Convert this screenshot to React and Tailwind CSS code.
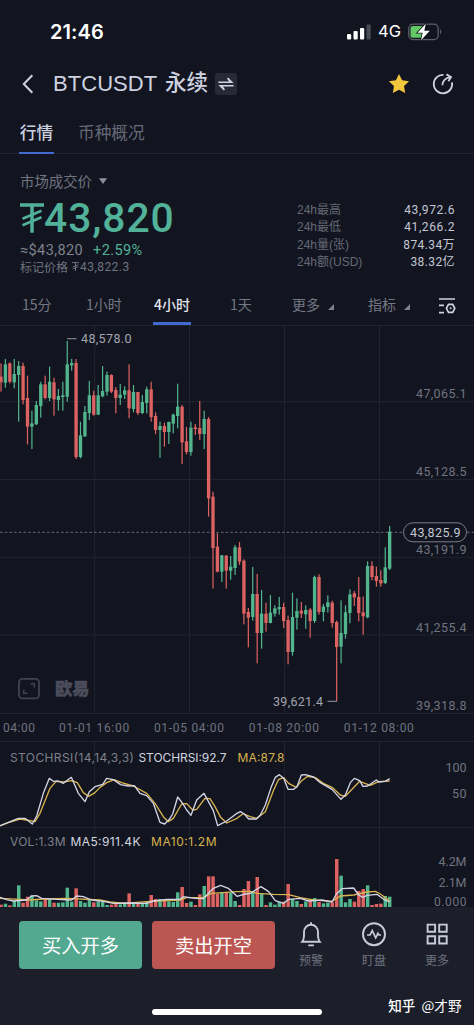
import React from "react";

const UP = "#52b58d";
const DOWN = "#dc6361";
const STEP = 13.25;

// Candles on a third-pixel grid: [direction, high, body top, body bottom, low, volume top]
const candles = [
  ["r",115,155,172,200,494],["g",102,118,173,188,491],["r",112,115,170,175,496],["g",102,147,172,190,482],
  ["g",108,123,150,290,436],["r",113,123,225,238,488],["r",152,219,305,358,470],["g",257,295,305,372,466],
  ["g",228,240,298,300,481],["g",170,178,243,278,484],["r",152,178,219,223,475],["g",125,170,219,228,477],
  ["r",158,172,223,272,488],["g",192,213,225,257,488],["g",170,211,216,257,487],["g",48,118,215,230,443],
  ["g",102,114,121,137,485],["r",102,114,396,402,445],["g",290,331,396,400,483],["g",243,261,334,336,488],
  ["g",168,211,264,285,478],["r",197,211,269,272,487],["g",180,211,269,270,484],["g",123,198,214,217,486],
  ["g",140,150,200,212,495],["r",148,150,200,204,494],["r",186,195,219,265,491],["g",177,209,219,240,493],
  ["g",184,196,209,222,490],["r",118,196,250,280,460],["g",180,201,252,262,486],["r",201,201,264,270,491],
  ["g",210,231,264,267,492],["g",185,193,234,265,483],["r",170,193,276,290,465],["r",262,273,315,328,477],
  ["g",290,303,315,398,477],["r",293,303,321,365,480],["g",290,291,321,357,484],["g",266,269,296,325,486],
  ["g",176,245,273,310,457],["r",240,245,352,417,441],["r",306,349,381,388,489],["g",290,308,381,392,485],
  ["r",297,307,312,330,495],["r",228,309,327,345,463],["g",257,282,327,372,438],["r",276,282,520,575,409],
  ["r",500,515,669,791,409],["r",625,665,740,742,461],["g",690,691,740,771,457],["r",690,692,737,791,458],
  ["g",693,725,737,764,458],["g",660,667,729,750,483],["r",651,667,710,720,495],["r",703,707,866,898,447],
  ["r",849,861,878,967,423],["g",726,807,876,887,455],["r",747,807,924,1015,411],["g",795,866,924,971,459],
  ["r",833,866,894,920,495],["g",810,863,894,895,487],["g",841,850,866,875,494],["g",816,846,853,869,486],
  ["r",833,846,888,909,485],["r",872,885,981,1018,432],["g",803,876,981,992,477],["g",820,858,878,914,483],
  ["r",831,857,866,879,492],["g",841,855,868,911,484],["r",849,854,888,938,481],["g",752,756,888,894,474],
  ["r",748,756,861,869,486],["g",837,845,861,889,490],["g",811,832,846,863,488],["r",827,833,894,908,487],
  ["r",887,891,966,1128,357],["g",826,924,965,1015,407],["g",841,862,927,941,487],["g",793,808,864,895,477],
  ["r",798,805,817,843,485],["r",756,816,864,889,453],["r",815,862,874,929,447],["g",709,723,877,880,436],
  ["r",709,723,756,766,495],["r",725,753,768,785,492],["r",736,765,775,785,491],["g",667,727,774,777,468],
  ["g",603,620,731,735,470],
];

const stochK = "0,257 55,235 75,235 97,252 110,228 130,160 148,115 160,124 175,123 190,130 214,112 235,160 255,185 268,155 285,140 308,133 320,115 340,119 362,134 385,138 403,137 420,160 440,167 460,190 480,247 494,252 508,238 518,222 533,171 548,190 560,210 573,226 590,180 612,160 640,212 653,257 680,243 711,220 721,215 733,222 746,237 769,237 781,225 796,195 814,140 826,112 838,104 851,115 864,148 881,148 891,140 904,105 916,104 941,111 961,128 996,148 1023,178 1036,165 1051,128 1063,115 1079,122 1089,139 1103,138 1129,120 1136,126 1156,124 1169,116";
const stochD = "0,258 25,248 60,237 80,240 105,245 120,220 150,145 168,124 190,126 215,122 232,128 250,158 266,169 285,158 300,142 320,128 342,119 365,128 400,138 440,160 465,190 490,230 505,245 520,235 545,192 560,191 578,210 590,208 615,175 630,176 645,200 662,232 680,249 711,235 729,221 750,230 771,235 796,215 821,150 836,118 851,113 866,130 889,142 905,122 923,109 946,113 970,130 996,142 1021,165 1036,169 1056,148 1079,124 1095,130 1111,136 1136,125 1169,123";
const volFast = "0,472 20,479 40,483 80,480 95,468 110,467 125,475 170,478 215,480 230,468 250,470 275,480 310,484 340,490 400,489 440,490 460,483 500,478 540,478 550,470 585,475 610,476 640,445 662,436 685,445 711,469 736,462 751,460 783,440 806,455 826,482 851,490 866,478 901,475 926,483 966,480 996,486 1009,462 1026,446 1061,444 1076,465 1089,472 1101,466 1131,463 1151,478 1169,486";
const volSlow = "0,475 60,478 90,480 130,477 200,475 300,480 330,486 360,489 400,488 450,484 540,480 560,473 610,472 635,460 711,455 751,454 771,460 821,463 866,464 901,473 941,480 996,484 1021,468 1061,465 1101,456 1126,454 1141,462 1169,483";

const gridX = [94.7, 189.5, 284.5, 379.5];

function Label({ x, y, len, size = 12.5, fill = "#6f7380", children }) {
  return (
    <text x={x} y={y} textLength={len} fontSize={size} fill={fill} lengthAdjust="spacing">
      {children}
    </text>
  );
}

function Grid({ height, rows = [] }) {
  return (
    <g stroke="#20242e" strokeWidth="1">
      {gridX.map((x) => <line key={x} x1={x} x2={x} y1="0" y2={height} />)}
      {rows.map((y) => <line key={y} x1="0" x2="474" y1={y} y2={y} />)}
    </g>
  );
}

function PriceChart() {
  return (
    <svg className="block font-[Roboto,sans-serif]" width="474" height="388" viewBox="0 0 474 388">
      <Grid height={388} rows={[0.5, 76.7, 154.5, 232.3, 310]} />
      <line x1="0" x2="403" y1="207.3" y2="207.3" stroke="#666a76" strokeWidth="1" strokeDasharray="2.6 2.1" />
      <g transform="scale(0.33333)">
        {candles.map(([d, h, t, b, l], i) => {
          const x = 3 + i * STEP;
          const c = d === "g" ? UP : DOWN;
          return (
            <g key={i} fill={c}>
              <rect x={x - 1.8} y={h} width="3.6" height={l - h} />
              <rect x={x - 5} y={t} width="10" height={Math.max(4, b - t)} />
            </g>
          );
        })}
      </g>
      <g stroke="#8b8f9b" strokeWidth="1.1" fill="none">
        <path d="M67 13.7H76.5" />
        <path d="M327.5 376.3H337" />
      </g>
      <Label x="81" y="18" len="50.5" fill="#a2a5b0">48,578.0</Label>
      <Label x="273" y="380.5" len="50" fill="#a2a5b0">39,621.4</Label>
      <Label x="416" y="73" len="50.5">47,065.1</Label>
      <Label x="416" y="150.5" len="50.5">45,128.5</Label>
      <Label x="416" y="229" len="50.5">43,191.9</Label>
      <Label x="416" y="306.5" len="50.5">41,255.4</Label>
      <Label x="416" y="385" len="50.5">39,318.8</Label>
      <rect x="403.5" y="197.8" width="63" height="19" rx="9.5" fill="#12151f" stroke="#7a7e8a" />
      <path d="M467 207.3h7" stroke="#666a76" strokeDasharray="2.6 2.1" />
      <Label x="410" y="211.8" len="50.5" fill="#c3c7d4">43,825.9</Label>
      <g stroke="#41434f" strokeWidth="1.8" fill="none">
        <rect x="19" y="353.8" width="20" height="19.6" rx="3.5" />
        <path d="M30.5 358.7h3.7v3.7M27.5 368.2h-3.7v-3.7" strokeWidth="1.5" />
      </g>
      <text x="55" y="370" fontSize="17.5" textLength="34.5" fontWeight="900" fill="#4b4d5c" stroke="#4b4d5c" strokeWidth=".4" fontFamily="'Noto Sans CJK SC', sans-serif">欧易</text>
    </svg>
  );
}

function StochChart() {
  return (
    <svg className="block font-[Inter,sans-serif]" width="474" height="86" viewBox="0 0 474 86">
      <Grid height={86} rows={[0.5]} />
      <g transform="translate(0 -1) scale(0.33333)" fill="none" strokeLinejoin="round">
        <polyline points={stochD} stroke="#d8b350" strokeWidth="4" />
        <polyline points={stochK} stroke="#d5d4e6" strokeWidth="4" />
      </g>
      <Label x="10" y="21" len="124" size={12} fill="#7d818d">STOCHRSI(14,14,3,3)</Label>
      <Label x="138.5" y="21" len="88" size={12} fill="#d3d6e0">STOCHRSI:92.7</Label>
      <Label x="237.5" y="21" len="47" size={12} fill="#d8b350">MA:87.8</Label>
      <g className="font-[Roboto,sans-serif]">
        <Label x="445.5" y="31" len="21">100</Label>
        <Label x="452" y="57" len="14.5">50</Label>
      </g>
    </svg>
  );
}

function VolumeChart() {
  return (
    <svg className="block font-[Roboto,sans-serif]" width="474" height="80" viewBox="0 0 474 80">
      <Grid height={80} rows={[0.5]} />
      <g transform="translate(0 -87) scale(0.33333)" fill="none" strokeLinejoin="round">
        {candles.map(([d, , , , , v], i) => (
          <rect key={i} x={3 + i * STEP - 5} y={v} width="10.4" height={501 - v} fill={d === "g" ? UP : DOWN} />
        ))}
        <polyline points={volSlow} stroke="#d8b350" strokeWidth="4" />
        <polyline points={volFast} stroke="#d5d4e6" strokeWidth="4" />
      </g>
      <g className="font-[Inter,sans-serif]">
        <Label x="10" y="19" len="55.5" size={12} fill="#7d818d">VOL:1.3M</Label>
        <Label x="70.5" y="19" len="70" size={12} fill="#d3d6e0">MA5:911.4K</Label>
        <Label x="151" y="19" len="65.5" size={12} fill="#d8b350">MA10:1.2M</Label>
      </g>
      <Label x="438.5" y="39" len="28">4.2M</Label>
      <Label x="438.5" y="60" len="28">2.1M</Label>
      <Label x="434" y="79.3" len="32.5" size={12}>0.000</Label>
    </svg>
  );
}

function StatusBar() {
  return (
    <div className="flex h-[60px] items-center pt-[3px] pl-[50px] pr-[32px] text-white">
      <span className="font-[Inter,sans-serif] text-[20px] font-semibold tracking-[0.1px]">21:46</span>
      <svg className="ml-auto" width="24" height="16" viewBox="0 0 24 16">
        <rect x="0" y="10" width="4.2" height="5.5" rx="1" fill="#fff" />
        <rect x="6.5" y="7" width="4.2" height="8.5" rx="1" fill="#fff" />
        <rect x="13" y="4" width="4.2" height="11.5" rx="1" fill="#fff" />
        <rect x="19.5" y="0.5" width="4.2" height="15" rx="1" fill="#484b54" />
      </svg>
      <span className="ml-[7px] w-[24px] font-[Inter,sans-serif] text-[16.5px]">4G</span>
      <svg className="ml-[6px]" width="34" height="18" viewBox="0 0 34 18">
        <rect x="0.8" y="1.2" width="29.4" height="15.4" rx="4.4" fill="none" stroke="#5d6069" strokeWidth="1.3" />
        <rect x="2.5" y="3" width="13" height="11.8" rx="2.6" fill="#62c866" />
        <path d="M32 6.3c1.6.6 1.6 4.4 0 5z" fill="#5d6069" />
        <path d="M17.8.8 9.5 9.8h5.2L13 17.2l8.8-9.4h-5.5z" fill="#fff" stroke="#12151f" strokeWidth="1.6" paintOrder="stroke" />
      </svg>
    </div>
  );
}

function Header() {
  return (
    <header className="flex h-[48px] items-center pl-[22px] pr-[20px] text-[#ced2e0]">
      <svg width="13" height="20" viewBox="0 0 13 20" fill="none" stroke="#ced2e0" strokeWidth="2">
        <path d="M10.3 1.2 1.8 10l8.5 8.8" />
      </svg>
      <h1 className="ml-[18px] flex items-center font-['Liberation_Sans','Noto_Sans_CJK_SC',sans-serif] text-[22px] leading-none">
        <span className="w-[112px] tracking-[0.05px]">BTCUSDT</span>
        <span className="text-[21.5px] font-medium">永续</span>
      </h1>
      <span className="ml-[7px] flex size-[22px] items-center justify-center rounded-[3px] bg-[#272a36]">
        <svg width="16" height="14" viewBox="0 0 16 14" fill="#ced2e0">
          <path d="M.4 4.4H11L9 1.6 10.2.6 15.6 6H.4zM15.6 9.6H5l2 2.8-1.2 1L.4 8h15.2z" />
        </svg>
      </span>
      <svg className="ml-auto" width="22" height="22" viewBox="0 0 22 22" fill="#f3c63e">
        <path d="m11 .9 3.1 6.3 7 1-5.1 4.9 1.2 7L11 16.8l-6.2 3.3 1.2-7L.9 8.2l7-1z" />
      </svg>
      <svg className="ml-[22px]" width="22" height="22" viewBox="0 0 22 22" fill="none" stroke="#ced2e0" strokeWidth="1.8">
        <path d="M11.5 1.9A9.2 9.2 0 1 0 20 9.4M10.4 12.3c.2-4.6 2.8-7.4 8.3-8.2M14.4 1.4l4.6 2.6-2.6 4.2" />
      </svg>
    </header>
  );
}

const stats = [
  ["24h最高", "43,972.6", "tracking-[0.6px]"],
  ["24h最低", "41,266.2", "tracking-[0.6px]"],
  ["24h量(张)", "874.34万", "tracking-[0.4px]"],
  ["24h额(USD)", "38.32亿", "tracking-[0.4px]"],
];

function PriceSummary() {
  return (
    <section className="flex h-[132px] items-start justify-between pl-[20px] pr-[20px]">
      <div className="flex flex-col pt-[18px]">
        <div className="flex h-[18px] items-center gap-[7px] text-[14.4px] text-[#6f7380]">
          市场成交价
          <svg width="8" height="6" viewBox="0 0 8 6" fill="#8e929e"><path d="M0 .3h8L4 6z" /></svg>
        </div>
        <div className="mt-[2px] flex h-[52px] items-center text-[#52b199]">
          <svg width="24" height="30" viewBox="0 0 24 30" fill="none" stroke="currentColor" strokeWidth="3.5">
            <path d="M0 2h24M12 2v27.7" />
            <path d="M2.5 15.7 21.5 7.8M2.5 22.2 21.5 14.3" strokeWidth="2.6" />
          </svg>
          <span className="font-[Roboto,sans-serif] text-[40.8px] leading-none font-medium tracking-[0.95px]">43,820</span>
        </div>
        <div className="-mt-[2px] flex h-[18px] items-center font-[Roboto,sans-serif] text-[14.5px] leading-none">
          <span className="w-[73px] tracking-[0.4px] text-[#7d818d]">≈$43,820</span>
          <span className="tracking-[0.4px] text-[#52b199]">+2.59%</span>
        </div>
        <div className="-mt-px flex h-[15px] items-center text-[12px] leading-none text-[#6f7380]">
          <span>标记价格</span>
          <svg className="ml-[4px]" width="7" height="9" viewBox="0 0 7 9" fill="none" stroke="currentColor"><path d="M0 .6h7M3.5.6V9M.7 5l5.6-2.3M.7 7l5.6-2.3" /></svg>
          <span className="ml-[1px] font-[Roboto,sans-serif] tracking-[0.45px]">43,822.3</span>
        </div>
      </div>
      <dl className="flex w-[157px] flex-col pt-[47.5px] text-[12px] leading-[17.6px]">
        {stats.map(([name, value, track]) => (
          <div key={name} className="flex justify-between">
            <dt className="font-['Liberation_Sans','Noto_Sans_CJK_SC',sans-serif] text-[#656976]">{name}</dt>
            <dd className={"-mr-px font-[Roboto,'Noto_Sans_CJK_SC',sans-serif] text-[#c3c7d4] " + track}>{value}</dd>
          </div>
        ))}
      </dl>
    </section>
  );
}

function Corner() {
  return <svg className="ml-[8px] mt-[4px]" width="6" height="6" viewBox="0 0 6 6" fill="#7d818d"><path d="M6 0v6H0z" /></svg>;
}

function Intervals() {
  return (
    <nav className="flex h-[39px] items-center pl-[22px] pr-[18px] text-[14px] text-[#747884]">
      <span className="-mt-[2px] w-[64px]">15分</span>
      <span className="-mt-[2px] w-[67px]">1小时</span>
      <span className="flex h-full w-[38px] items-center justify-center border-b-[3px] border-[#4169cf] pt-[1px] font-medium whitespace-nowrap text-[#e1e4ee]">4小时</span>
      <span className="-mt-[2px] ml-[39px] w-[62px]">1天</span>
      <span className="-mt-[2px] flex w-[76px] items-center">更多<Corner /></span>
      <span className="-mt-[2px] flex items-center">指标<Corner /></span>
      <svg className="ml-auto" width="17" height="16" viewBox="0 0 17 16" fill="none" stroke="#ced2e0" strokeWidth="1.7">
        <path d="M0 1h16M0 7.3h5M0 14.6h5" />
        <path d="M9.5 6.3h4.2l2.1 4-2.1 4H9.5l-2.1-4z" />
        <circle cx="11.6" cy="10.3" r="1" fill="#ced2e0" stroke="none" />
      </svg>
    </nav>
  );
}

function Action({ label, children }) {
  return (
    <div className="flex w-[63px] flex-col items-center gap-[4px] text-[12px] leading-[18px] text-[#6f7380]">
      <svg width="26" height="26" viewBox="0 0 26 26" fill="none" stroke="#c8ccda" strokeWidth="1.9">{children}</svg>
      {label}
    </div>
  );
}

export default function App() {
  return (
    <main className="relative flex h-[1025px] w-[474px] flex-col overflow-hidden bg-[#12151f] font-['Noto_Sans_CJK_SC',sans-serif]">
      <StatusBar />
      <Header />
      <nav className="flex h-[46px] border-b border-[#20232d] pl-[19px] text-[16.7px] text-[#656976]">
        <span className="flex h-[46px] w-[35px] items-center justify-center border-b-2 border-[#4169cf] pt-[6px] font-medium whitespace-nowrap text-[#ced2e0]">行情</span>
        <span className="ml-[24px] flex items-center pt-[5px]">币种概况</span>
      </nav>
      <PriceSummary />
      <Intervals />
      <PriceChart />
      <div className="flex h-[28px] items-center overflow-hidden border-t border-[#20242e] font-[Roboto,sans-serif] text-[12px] whitespace-nowrap text-[#6f7380]">
        <span className="w-[47px] shrink-0 pt-px pl-[3px] tracking-[0.5px]">04:00</span>
        {["01-01 16:00", "01-05 04:00", "01-08 20:00", "01-12 08:00"].map((t) => (
          <span key={t} className="w-[94.9px] shrink-0 pt-px text-center tracking-[0.7px]">{t}</span>
        ))}
      </div>
      <StochChart />
      <VolumeChart />
      <footer className="relative flex grow flex-col bg-[#1c1f2a]">
        <div className="flex pt-[14px] pl-[19px]">
          <button className="h-[48px] w-[123px] rounded-[4px] bg-[#52a98f] text-[19.3px] text-white">买入开多</button>
          <button className="ml-[10px] h-[48px] w-[123px] rounded-[4px] bg-[#bb5652] text-[19.3px] text-white">卖出开空</button>
          <div className="ml-[4.5px] flex">
            <Action label="预警">
              <path d="M4.2 20.8h17.6c-1.4-1.7-1.8-3-1.8-6v-3.5c0-4.5-3-7.5-7-7.5s-7 3-7 7.5v3.5c0 3-.4 4.3-1.8 6zM10.3 24.4h5.6M13 1.2v3" />
            </Action>
            <Action label="盯盘">
              <circle cx="13" cy="13.2" r="11" />
              <path d="M6 14h3l2.3-4.4 3.4 7.2 2.2-4.5 1 1.7H20" strokeWidth="1.7" />
            </Action>
            <Action label="更多">
              <path d="M3.6 3.6h7.5v7.2H3.6zM15.2 3.6h7.5v7.2h-7.5zM3.6 15.3h7.5v7.2H3.6zM15.2 15.3h7.5v7.2h-7.5z" />
            </Action>
          </div>
        </div>
        <div className="mt-[40px] ml-[152px] h-[6px] w-[170px] rounded-full bg-white" />
        <p className="absolute right-[12.5px] bottom-[10px] text-[13.6px] leading-[20px] whitespace-nowrap text-white">
          <span className="mr-[6px] font-medium">知乎</span>@才野
        </p>
      </footer>
    </main>
  );
}
